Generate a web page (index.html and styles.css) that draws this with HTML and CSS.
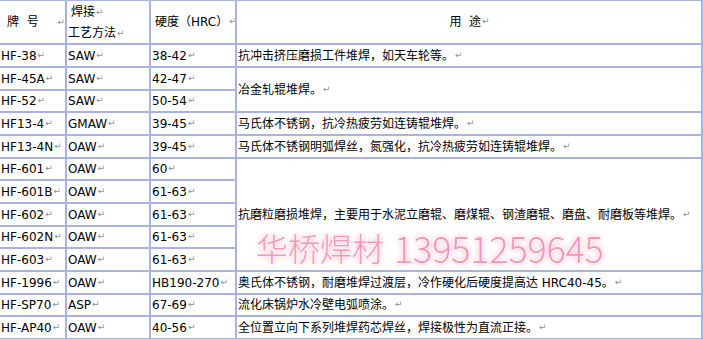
FILE: index.html
```html
<!DOCTYPE html>
<html lang="zh">
<head>
<meta charset="utf-8">
<title>焊材</title>
<link rel="stylesheet" href="styles.css">
</head>
<body>
<div class="page">
  <table class="spec">
    <colgroup>
      <col class="c1"><col class="c2"><col class="c3"><col class="c4">
    </colgroup>
    <tbody>
      <tr class="head">
        <td><div class="h1"><span class="cn">牌&nbsp;&nbsp;号</span><span class="pm">↵</span></div></td>
        <td><div class="h2a">焊接<span class="pm">↵</span></div><div class="h2b">工艺方法<span class="pm">↵</span></div></td>
        <td><div class="h3">硬度（HRC）<span class="pm">↵</span></div></td>
        <td class="center">用&nbsp;&nbsp;途<span class="pm">↵</span></td>
      </tr>
      <tr>
        <td>HF-38<span class="pm">↵</span></td><td>SAW<span class="pm">↵</span></td><td>38-42<span class="pm">↵</span></td>
        <td>抗冲击挤压磨损工件堆焊，如天车轮等。<span class="pm">↵</span></td>
      </tr>
      <tr>
        <td>HF-45A<span class="pm">↵</span></td><td>SAW<span class="pm">↵</span></td><td>42-47<span class="pm">↵</span></td>
        <td rowspan="2">冶金轧辊堆焊。<span class="pm">↵</span></td>
      </tr>
      <tr class="short">
        <td>HF-52<span class="pm">↵</span></td><td>SAW<span class="pm">↵</span></td><td>50-54<span class="pm">↵</span></td>
      </tr>
      <tr>
        <td>HF13-4<span class="pm">↵</span></td><td>GMAW<span class="pm">↵</span></td><td>39-45<span class="pm">↵</span></td>
        <td>马氏体不锈钢，抗冷热疲劳如连铸辊堆焊。<span class="pm">↵</span></td>
      </tr>
      <tr>
        <td>HF13-4N<span class="pm">↵</span></td><td>OAW<span class="pm">↵</span></td><td>39-45<span class="pm">↵</span></td>
        <td>马氏体不锈钢明弧焊丝，氮强化，抗冷热疲劳如连铸辊堆焊。<span class="pm">↵</span></td>
      </tr>
      <tr class="short">
        <td>HF-601<span class="pm">↵</span></td><td>OAW<span class="pm">↵</span></td><td>60<span class="pm">↵</span></td>
        <td rowspan="5">抗磨粒磨损堆焊，主要用于水泥立磨辊、磨煤辊、钢渣磨辊、磨盘、耐磨板等堆焊。<span class="pm">↵</span></td>
      </tr>
      <tr>
        <td>HF-601B<span class="pm">↵</span></td><td>OAW<span class="pm">↵</span></td><td>61-63<span class="pm">↵</span></td>
      </tr>
      <tr>
        <td>HF-602<span class="pm">↵</span></td><td>OAW<span class="pm">↵</span></td><td>61-63<span class="pm">↵</span></td>
      </tr>
      <tr class="short">
        <td>HF-602N<span class="pm">↵</span></td><td>OAW<span class="pm">↵</span></td><td>61-63<span class="pm">↵</span></td>
      </tr>
      <tr>
        <td>HF-603<span class="pm">↵</span></td><td>OAW<span class="pm">↵</span></td><td>61-63<span class="pm">↵</span></td>
      </tr>
      <tr>
        <td>HF-1996<span class="pm">↵</span></td><td>OAW<span class="pm">↵</span></td><td>HB190-270<span class="pm">↵</span></td>
        <td>奥氏体不锈钢，耐磨堆焊过渡层，冷作硬化后硬度提高达 HRC40-45。<span class="pm">↵</span></td>
      </tr>
      <tr class="short">
        <td>HF-SP70<span class="pm">↵</span></td><td>ASP<span class="pm">↵</span></td><td>67-69<span class="pm">↵</span></td>
        <td>流化床锅炉水冷壁电弧喷涂。<span class="pm">↵</span></td>
      </tr>
      <tr>
        <td>HF-AP40<span class="pm">↵</span></td><td>OAW<span class="pm">↵</span></td><td>40-56<span class="pm">↵</span></td>
        <td>全位置立向下系列堆焊药芯焊丝，焊接极性为直流正接。<span class="pm">↵</span></td>
      </tr>
    </tbody>
  </table>
  <div class="watermark"><span class="wm-cn">华桥焊材</span><span class="wm-num">13951259645</span></div>
</div>
</body>
</html>
```

FILE: styles.css
```css
html, body {
  margin: 0;
  padding: 0;
  background: #ffffff;
  overflow: hidden;
}

.page {
  position: relative;
  width: 703px;
  height: 339px;
  overflow: hidden;
}

.spec {
  margin: -1px 0 0 -2px;
  width: 705px;
  table-layout: fixed;
  border-collapse: separate;
  border-spacing: 0;
  border: 1px solid #a9b3e1;
  font-family: "DejaVu Sans", "Noto Sans CJK SC", sans-serif;
  font-size: 12px;
  line-height: 14px;
  color: #000;
}

.c1 { width: 67px; }
.c2 { width: 84px; }
.c3 { width: 86px; }
.c4 { width: 466px; }

.spec td {
  border: 1px solid #a9b3e1;
  padding: 0 0 0 1px;
  vertical-align: middle;
  white-space: nowrap;
  overflow: hidden;
}

.spec tr { height: 23px; }
.spec tr.short { height: 22px; }
.spec tr.head { height: 44px; }

.pm {
  font-family: "DejaVu Sans", sans-serif;
  font-size: 9px;
  line-height: 0;
  color: #909090;
  margin-left: 1px;
  vertical-align: 2px;
}

.h1 {
  display: flex;
  justify-content: space-between;
  align-items: center;
  padding-left: 6px;
}

.h2a, .h2b {
  height: 21px;
  display: flex;
  align-items: center;
}
.h2a { padding-left: 3px; }

.h3 { padding-left: 3px; }

.spec td.center { text-align: center; padding-right: 0; }

.watermark {
  position: absolute;
  left: 256px;
  top: 229px;
  display: flex;
  align-items: center;
  gap: 10px;
  color: #f497b5;
  text-shadow: 0 0 1px #fff, 0 0 2px #fff, 0 0 2px #fff, 0 0 5px #f7b6ca, 0 0 7px #fbd0dc;
  white-space: nowrap;
  line-height: 1;
}

.wm-cn {
  font-family: "Noto Sans CJK SC", sans-serif;
  font-weight: 300;
  font-size: 32px;
}

.wm-num {
  font-family: "Noto Sans CJK SC", sans-serif;
  font-weight: 300;
  font-size: 36px;
  letter-spacing: -0.2px;
}
```
